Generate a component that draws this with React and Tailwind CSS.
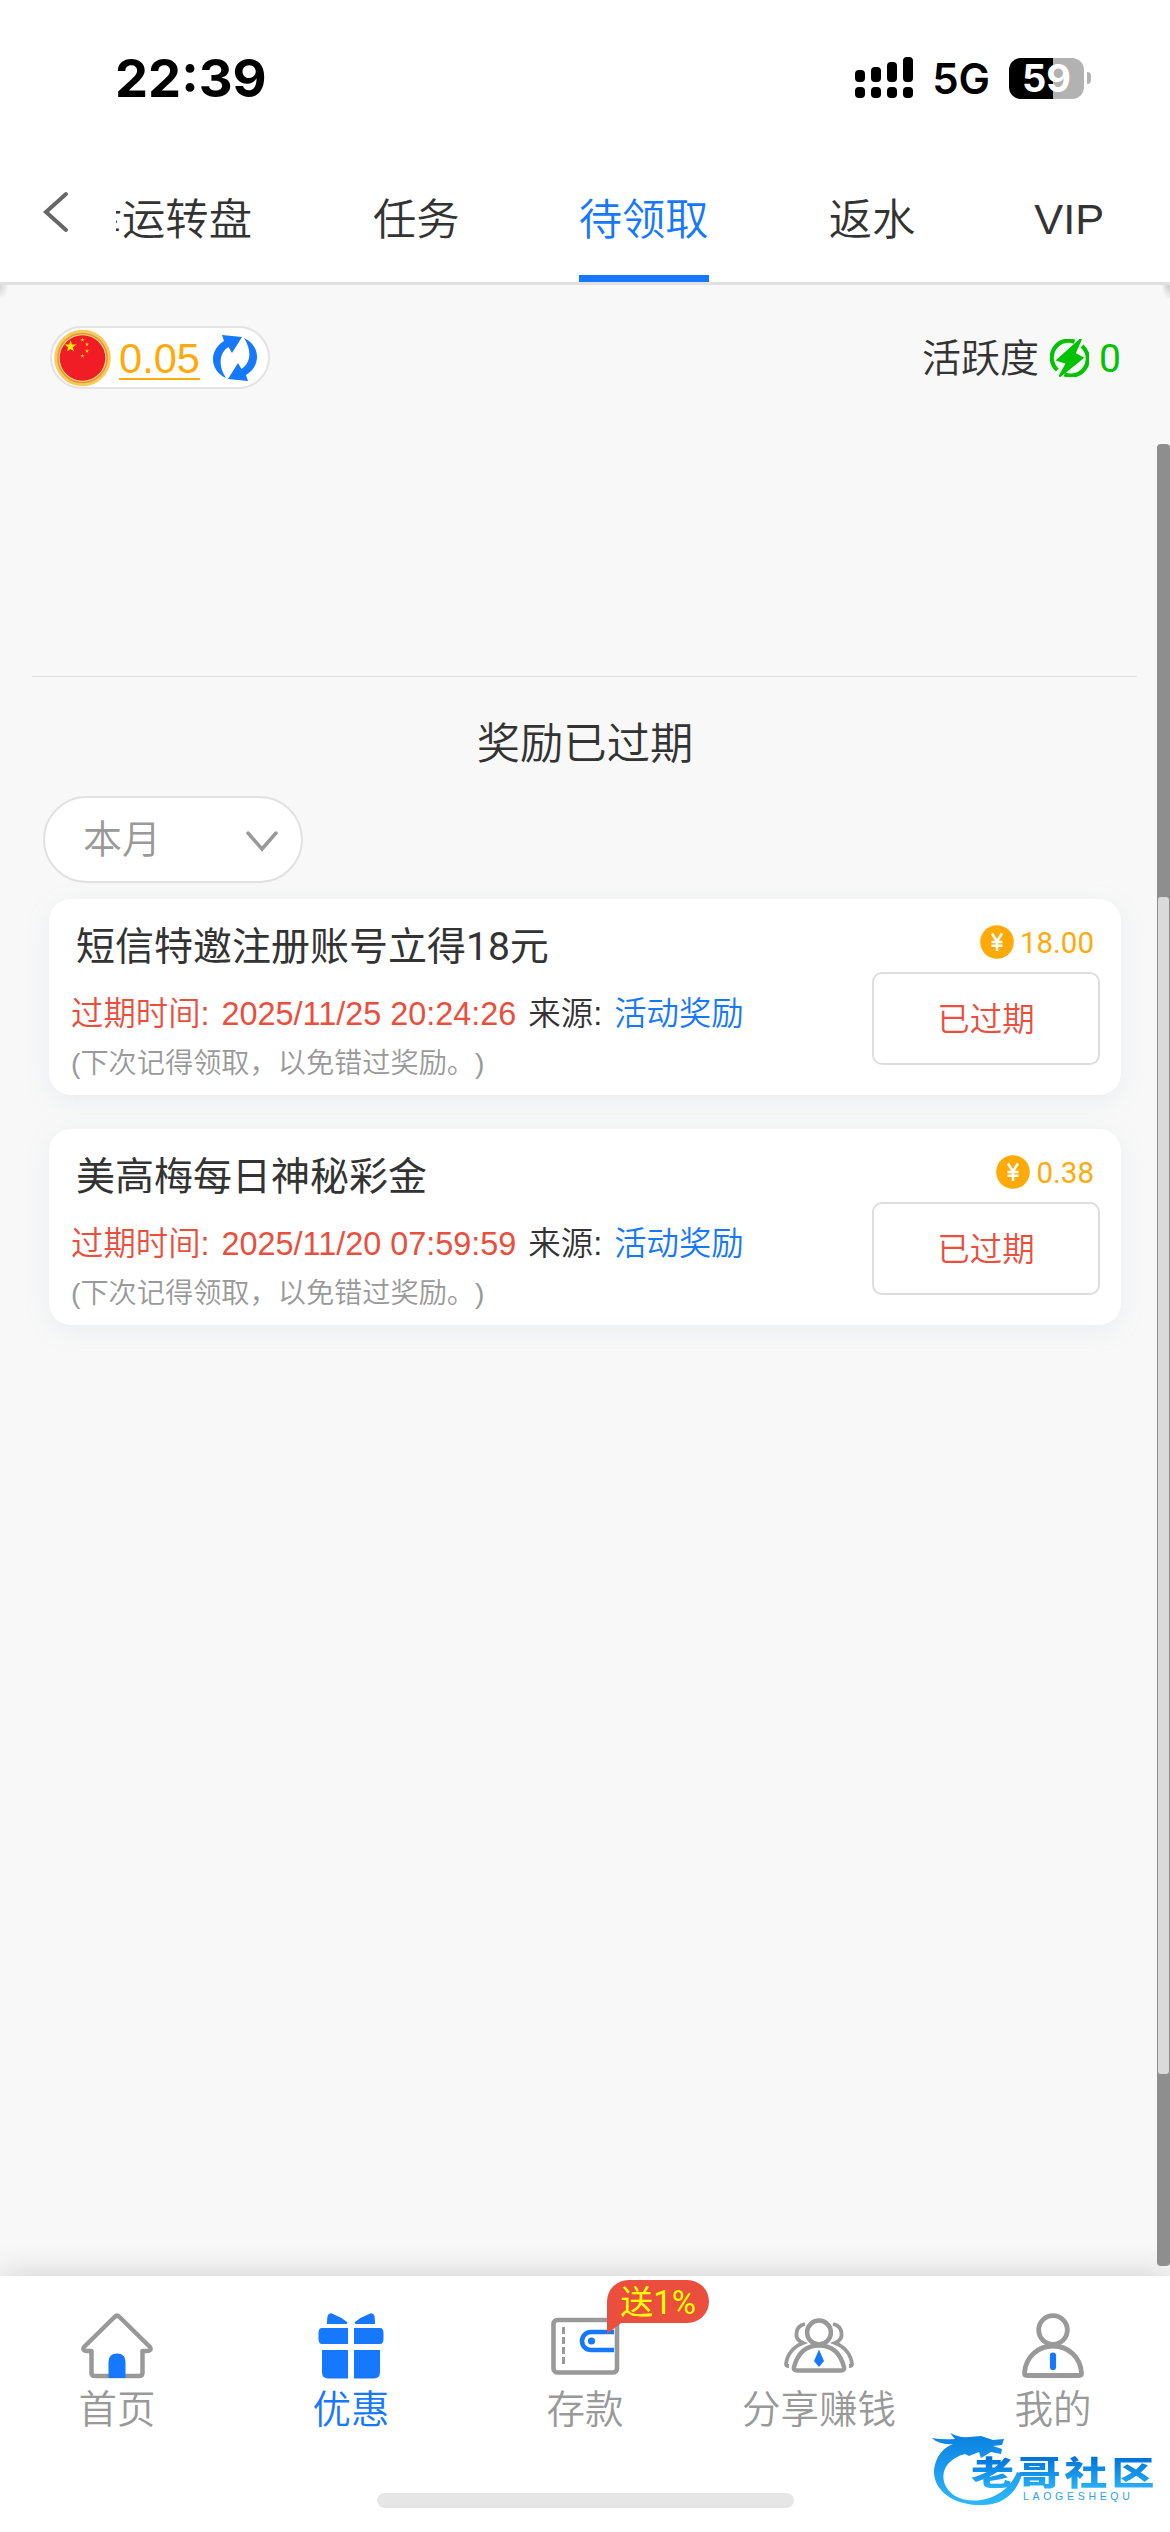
import React from "react";

const tabs = [
  { label: "任务", className: "ml-[121px]" },
  { label: "待领取", className: "ml-[119px]", active: true },
  { label: "返水", className: "ml-[120px]" },
  { label: "VIP", className: "ml-[119px] leading-[126px]" },
];

const rewards = [
  { title: "短信特邀注册账号立得18元", time: "2025/11/25 20:24:26", amount: "18.00" },
  { title: "美高梅每日神秘彩金", time: "2025/11/20 07:59:59", amount: "0.38" },
];

function SignalIcon() {
  return (
    <svg className="h-[42px] w-[60px]" viewBox="0 0 60 42">
      <rect x="1" y="13" width="10" height="12" rx="4" />
      <rect x="17" y="10" width="10" height="15" rx="4" />
      <rect x="33" y="5" width="10" height="20" rx="4" />
      <rect x="49" y="0" width="10" height="25" rx="4" />
      <rect x="1" y="30" width="10" height="11" rx="4" />
      <rect x="17" y="30" width="10" height="11" rx="4" />
      <rect x="33" y="30" width="10" height="11" rx="4" />
      <rect x="49" y="30" width="10" height="11" rx="4" />
    </svg>
  );
}

function Battery() {
  return (
    <div className="flex items-center">
      <div className="flex h-[41px] w-[75px] items-center justify-center rounded-[12px] bg-[linear-gradient(90deg,#000_59%,#b2b2b2_59%)] text-[38px] font-bold text-white">
        59
      </div>
      <div className="ml-[3px] h-[12px] w-[4px] rounded-r-full bg-[#b2b2b2]" />
    </div>
  );
}

function StatusBar() {
  return (
    <div className="flex h-[156px] items-center justify-between pr-[79px] pl-[115px] font-['Inter',sans-serif] text-black">
      <div className="pt-px text-[52.5px] leading-none font-bold">22:39</div>
      <div className="flex items-center">
        <SignalIcon />
        <span className="mt-[2px] ml-[18px] text-[42px] leading-none font-semibold">5G</span>
        <div className="ml-[19px]">
          <Battery />
        </div>
      </div>
    </div>
  );
}

function FlagIcon() {
  const star = "M0 -1 L.225 -.31 L.951 -.309 L.363 .118 L.588 .809 L0 .382 L-.588 .809 L-.363 .118 L-.951 -.309 L-.225 -.31Z";
  return (
    <svg className="h-[58px] w-[57px]" viewBox="0 0 57 58">
      <circle cx="28.5" cy="29" r="28.3" fill="#fbc95c" />
      <circle cx="28.5" cy="29" r="24.6" fill="#fbd776" stroke="#e09a3a" strokeWidth="1.5" />
      <circle cx="28.5" cy="29" r="22.8" fill="#f01c26" />
      <path d={star} fill="#ffec00" transform="translate(16.5 17.5) scale(6.3)" />
      <path d={star} fill="#ffd21a" transform="translate(28.5 11) scale(2.2)" />
      <path d={star} fill="#ffd21a" transform="translate(33 15.5) scale(2.2)" />
      <path d={star} fill="#ffd21a" transform="translate(33 22) scale(2.2)" />
      <path d={star} fill="#ffd21a" transform="translate(28.5 27) scale(2.2)" />
    </svg>
  );
}

function RefreshIcon() {
  return (
    <svg className="h-[46px] w-[44px]" viewBox="0 0 44 46" fill="#1677ff">
      <path d="M9 0 L29 2 L19 18 L15.5 12 C6 18 5 31 13 43 C-4 35 -4 15 11 6Z" />
      <path d="M35 46 L15 44 L25 28 L28.5 34 C38 28 39 15 31 3 C48 11 48 31 33 40Z" />
    </svg>
  );
}

function BoltIcon() {
  return (
    <svg className="h-[38px] w-[39px]" viewBox="0 0 39 38">
      <path d="M24.5 2.8 A16.8 16.8 0 0 0 7.3 31" fill="none" stroke="#00c300" strokeWidth="4.2" />
      <path d="M32 7 A16.8 16.8 0 0 1 14.5 35.2" fill="none" stroke="#00c300" strokeWidth="4.2" />
      <path d="M31 0 L7.5 21 L17 24 L9.5 37.5 L32.5 19 L24.5 14.5Z" fill="#00c300" stroke="#00c300" strokeWidth="2" />
    </svg>
  );
}

function CoinIcon() {
  return (
    <svg className="h-[34px] w-[34px]" viewBox="0 0 34 34">
      <circle cx="17" cy="17" r="16.8" fill="#ffaa09" />
      <path d="M12 8.5 L17 16.5 L22 8.5 M17 16.5 V26 M11.5 17 H22.5 M11.5 20.8 H22.5" fill="none" stroke="#fff" strokeWidth="2.5" />
    </svg>
  );
}

function HomeIcon() {
  return (
    <svg className="h-[66px] w-[72px]" viewBox="0 0 72 66">
      <path
        d="M33.5 4 Q36 1.5 38.5 4 L69 34 Q71 38 66 38 L61.5 38 V60 Q61.5 63 58 63 H14 Q10.5 63 10.5 60 V38 H6 Q1 38 3 34Z"
        fill="#fff"
        stroke="#999"
        strokeWidth="4.5"
        strokeLinejoin="round"
      />
      <path d="M27.5 65 V49 Q27.5 40.5 36 40.5 Q44.5 40.5 44.5 49 V65Z" fill="#1677ff" />
    </svg>
  );
}

function GiftIcon() {
  return (
    <svg className="h-[66px] w-[66px]" viewBox="0 0 66 66" fill="#1677ff">
      <path d="M9 11 Q9 4 10 2 Q12 -1 15 1 Q23 4 29 9 Q30 11 28 11Z" />
      <path d="M57 11 Q57 4 56 2 Q54 -1 51 1 Q43 4 37 9 Q36 11 38 11Z" />
      <path d="M30 15 V31 H4 Q.5 31 .5 26 V20 Q.5 15 4 15Z" />
      <path d="M36 15 V31 H62 Q65.5 31 65.5 26 V20 Q65.5 15 62 15Z" />
      <path d="M4 37 H30 V65.5 H10 Q4 65.5 4 59Z" />
      <path d="M62 37 H36 V65.5 H56 Q62 65.5 62 59Z" />
    </svg>
  );
}

function WalletIcon() {
  return (
    <svg className="h-[66px] w-[70px]" viewBox="0 0 70 66" fill="none">
      <rect x="3.5" y="7" width="63.5" height="52.5" rx="4" stroke="#999" strokeWidth="4.6" />
      <path d="M13.5 14 V52" stroke="#999" strokeWidth="3" strokeDasharray="7 3" />
      <path d="M64 19 H41 A9 9 0 0 0 41 37 H64" stroke="#1677ff" strokeWidth="4.6" />
      <circle cx="41.5" cy="28" r="3.6" fill="#1677ff" />
    </svg>
  );
}

function ShareIcon() {
  return (
    <svg className="h-[66px] w-[72px]" viewBox="0 0 72 66" fill="none" stroke="#999" strokeWidth="4.5">
      <path d="M22 11 C12 13 10 26 20 30 C10 34 4 42 3 51 Q3 53 6 53" strokeWidth="3.8" />
      <path d="M50 11 C60 13 62 26 52 30 C62 34 68 42 69 51 Q69 53 66 53" strokeWidth="3.8" />
      <circle cx="36" cy="19.5" r="11.9" fill="#fff" />
      <path d="M14 57.5 H58 Q62 57.5 61 54 C57 39 48 32.5 36 32.5 C24 32.5 15 39 11 54 Q10 57.5 14 57.5Z" fill="#fff" />
      <path d="M36 36.5 L41 48 L36 54 L31 48Z" fill="#1677ff" stroke="none" />
    </svg>
  );
}

function UserIcon() {
  return (
    <svg className="h-[66px] w-[64px]" viewBox="0 0 64 66" fill="none" stroke="#999" strokeWidth="4.8">
      <circle cx="32" cy="17" r="14.3" />
      <path d="M6 62.5 H58 Q60.5 62.5 60.5 60 C59.5 44 47 33 32 33 C17 33 4.5 44 3.5 60 Q3.5 62.5 6 62.5Z" strokeLinejoin="round" />
      <path d="M32 42.5 V54" stroke="#1677ff" strokeWidth="6.2" strokeLinecap="round" />
    </svg>
  );
}

function Header() {
  return (
    <header className="bg-white">
      <StatusBar />
      <div className="relative flex h-[129px] items-start border-b-[3px] border-[#e1e1e1]">
        <svg className="mt-[34px] ml-[42px] h-[44px] w-[28px]" viewBox="0 0 28 44" fill="none" stroke="#666" strokeWidth="4" strokeLinecap="round">
          <path d="M24 4 L4 22 L24 40" />
        </svg>
        <div className="ml-[46px] flex h-[126px] flex-1 text-[43.333px] leading-[128px] whitespace-nowrap text-[#333]">
          <div className="flex w-[136px] justify-end overflow-hidden">
            <span>幸运转盘</span>
          </div>
          {tabs.map((tab) => (
            <div key={tab.label} className={tab.className}>
              <div className={tab.active ? "h-[126px] border-b-[7px] border-[#1677ff] text-[#1677ff]" : "h-[126px]"}>{tab.label}</div>
            </div>
          ))}
        </div>
        <div className="absolute top-[129px] left-0 h-[14px] w-[8px] bg-[radial-gradient(ellipse_at_top_left,#d4d4d4,transparent_75%)]" />
        <div className="absolute top-[129px] right-0 h-[14px] w-[8px] bg-[radial-gradient(ellipse_at_top_right,#c8c8c8,transparent_75%)]" />
      </div>
    </header>
  );
}

function BalanceBar() {
  return (
    <div className="flex items-center justify-between pt-[41px] pr-[49px] pl-[50px]">
      <div className="flex h-[63px] w-[220px] items-center rounded-full border-2 border-[#e3e3e3] bg-white pl-[2px]">
        <FlagIcon />
        <span className="ml-[8px] h-[45px] border-b-[2px] border-[#ffaa09] text-[41.6px] leading-[48px] text-[#ffaa09]">0.05</span>
        <div className="ml-[13px]">
          <RefreshIcon />
        </div>
      </div>
      <div className="flex items-center text-[39px] leading-[44px]">
        <span className="pt-[2px] text-[#333]">活跃度</span>
        <div className="mr-[10px] ml-[11px]">
          <BoltIcon />
        </div>
        <span className="pt-[2px] font-['Roboto',sans-serif] font-normal text-[#00c300]">0</span>
      </div>
    </div>
  );
}

function RewardCard({ reward }) {
  return (
    <div className="flex h-[196px] justify-between rounded-[22px] bg-white pr-[21px] pl-[22px] shadow-[0_6px_24px_rgba(150,170,190,0.13)]">
      <div className="pt-[21px] whitespace-nowrap">
        <div className="pl-[5px] font-['Roboto','Noto_Sans_CJK_SC',sans-serif] text-[39px] leading-[54px] font-normal text-[#333]">{reward.title}</div>
        <div className="mt-[17px] flex h-[46px] items-center text-[32.4px] text-[#333]">
          <span className="text-[#ea4e3d]">过期时间:</span>
          <span className="ml-[12px] text-[#ea4e3d]">{reward.time}</span>
          <span className="ml-[12px]">来源:</span>
          <span className="ml-[12px] text-[#1677ff]">活动奖励</span>
        </div>
        <div className="mt-[6px] text-[28.2px] leading-[40px] text-[#999] [text-spacing-trim:space-all]">(下次记得领取，以免错过奖励。)</div>
      </div>
      <div className="flex flex-col items-end pt-[26px]">
        <div className="flex h-[34px] items-center gap-[6px] pr-[6px] font-['Roboto',sans-serif] text-[29.5px] font-normal text-[#ffaa09]">
          <CoinIcon />
          <span className="pt-[2px]">{reward.amount}</span>
        </div>
        <button className="mt-[13px] h-[93px] w-[228px] rounded-[10px] border-2 border-[#ddd] pt-[3px] text-[32.5px] text-[#ea4e3d]">已过期</button>
      </div>
    </div>
  );
}

function NavItem({ icon, label, active, badge }) {
  return (
    <div className="relative flex flex-1 flex-col items-center pt-[37px]">
      {icon}
      <span className={active ? "mt-[4px] text-[38.5px] leading-[54px] text-[#1677ff]" : "mt-[4px] text-[38.5px] leading-[54px] text-[#999]"}>{label}</span>
      {badge && (
        <div className="absolute top-[4px] left-[139px]">
          <div className="h-[43px] w-[102px] rounded-[22px] rounded-bl-none bg-[#ea4e3d] text-center font-['Roboto','Noto_Sans_CJK_SC',sans-serif] text-[33px] leading-[45px] font-normal text-[#ff0]">{badge}</div>
          <svg className="h-[11px] w-[14px]" viewBox="0 0 14 11">
            <path d="M0 0 H14 L0 11Z" fill="#ea4e3d" />
          </svg>
        </div>
      )}
    </div>
  );
}

function Watermark() {
  return (
    <div className="absolute top-[154px] left-[931px] h-[78px] w-[225px]">
      <svg className="absolute h-[78px] w-[100px]" viewBox="0 0 100 78">
        <defs>
          <linearGradient id="wave" x1="0" y1="0" x2="0" y2="1">
            <stop offset="0" stopColor="#0a7fe0" />
            <stop offset="1" stopColor="#2db8fb" />
          </linearGradient>
        </defs>
        <path
          d="M1 8 Q10 10 24 9 L19 3 Q28 8 38 7 L50 6 L62 10 L73 9 L71 15 L62 16 L71 19 L70 24 L60 22 L50 28 L48 22 L38 26 L34 24 C10 30 5 53 24 66 C44 77 76 68 86 42 L91 44 C85 66 68 76 49 75 C22 75 2 60 3 40 C4 27 13 17 22 14 Q8 15 1 8Z"
          fill="url(#wave)"
        />
      </svg>
      <div className="absolute top-[26px] left-[40px] origin-left scale-x-[1.3] bg-gradient-to-b from-[#0070d8] to-[#2db8fb] bg-clip-text text-[33px] leading-[36px] font-black tracking-[3px] whitespace-nowrap text-transparent">
        老哥社区
      </div>
      <div className="absolute top-[60px] left-[92px] text-[10.5px] leading-[12px] tracking-[3.7px] text-[#2ba0ee]">LAOGESHEQU</div>
    </div>
  );
}

function BottomNav() {
  return (
    <nav className="relative h-[256px] bg-white shadow-[0_-4px_30px_rgba(0,0,0,0.14)]">
      <div className="flex h-[161px]">
        <NavItem icon={<HomeIcon />} label="首页" />
        <NavItem icon={<GiftIcon />} label="优惠" active />
        <NavItem icon={<WalletIcon />} label="存款" badge="送1%" />
        <NavItem icon={<ShareIcon />} label="分享赚钱" />
        <NavItem icon={<UserIcon />} label="我的" />
      </div>
      <div className="mx-auto mt-[56px] h-[15px] w-[417px] rounded-full bg-[#e6e6e6]" />
      <Watermark />
    </nav>
  );
}

export default function App() {
  return (
    <div className="relative flex h-[2532px] w-[1170px] flex-col overflow-hidden bg-[#f8f8f8] font-['Liberation_Sans','Noto_Sans_CJK_SC',sans-serif] font-[350]">
      <Header />
      <main className="flex-1">
        <BalanceBar />
        <div className="mt-[287px] mr-[33px] ml-[32px] h-px bg-[#e1e1e1]" />
        <h2 className="mt-[39px] text-center text-[43.333px] leading-[56px] text-[#333]">奖励已过期</h2>
        <div className="mt-[24px] ml-[43px] flex h-[87px] w-[260px] items-center justify-between rounded-full border-2 border-[#e1e1e1] bg-white pr-[21px] pl-[38px] text-[39px] text-[#999]">
          <span className="pt-[2px]">本月</span>
          <svg className="mt-[3px] h-[24px] w-[36px]" viewBox="0 0 36 24" fill="none" stroke="#999" strokeWidth="3.5" strokeLinecap="round">
            <path d="M4 4 L18 20 L32 4" />
          </svg>
        </div>
        <div className="mt-[16px] flex flex-col gap-[34px] pr-[49px] pl-[49px]">
          {rewards.map((reward) => (
            <RewardCard key={reward.title} reward={reward} />
          ))}
        </div>
      </main>
      <BottomNav />
      {/* scroll track and thumb over the right edge */}
      <div className="absolute top-[444px] right-0 h-[1822px] w-[13px] rounded-[4px] bg-[#8e8e8e]">
        <div className="mt-[453px] ml-px h-[1177px] w-[11px] rounded-[3px] bg-[#dadada]" />
      </div>
    </div>
  );
}
